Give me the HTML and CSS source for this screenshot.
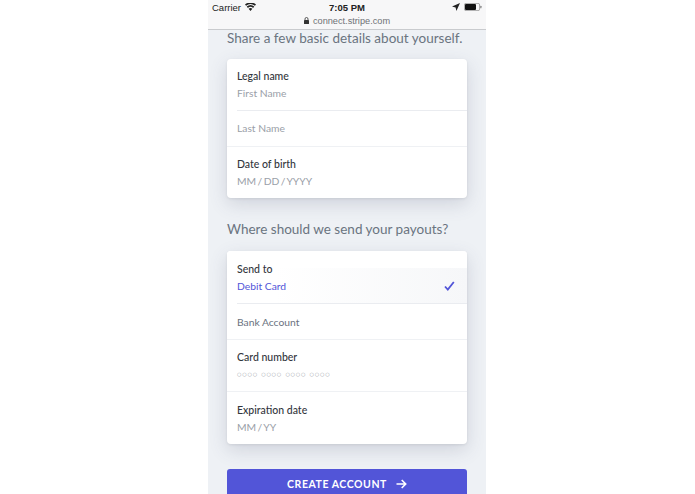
FILE: index.html
```html
<!DOCTYPE html>
<html lang="en">
<head>
<meta charset="utf-8">
<title>Stripe Connect</title>
<link rel="stylesheet" href="styles.css">
</head>
<body>
<div class="phone">
  <header class="chrome">
    <div class="status">
      <div class="status-left">
        <span>Carrier</span>
        <svg class="wifi" width="11" height="8" viewBox="0 0 11 8"><path d="M5.5 8 3.6 5.700a3 3 0 0 1 3.800 0zM2.900 4.900 1.700 3.500a6 6 0 0 1 7.600 0L8.100 4.900a4 4 0 0 0-5.200 0zM1.100 2.800 0 1.500a8.600 8.600 0 0 1 11 0L9.900 2.800a7 7 0 0 0-8.800 0z" fill="#222"/></svg>
      </div>
      <span class="time">7:05 PM</span>
      <div class="status-right">
        <svg width="8" height="8" viewBox="0 0 8 8"><path d="M8 0 0 3.600l3.600.8.800 3.600z" fill="#222"/></svg>
        <svg width="18" height="8" viewBox="0 0 18 8"><rect x=".4" y=".4" width="15.200" height="7.200" rx="1.500" fill="none" stroke="#888" stroke-width=".7"/><rect x="1" y="1" width="11" height="6" rx="1" fill="#111"/><rect x="16.200" y="2.700" width="1.300" height="2.600" rx=".6" fill="#888"/></svg>
      </div>
    </div>
    <div class="url">
      <svg width="5" height="7" viewBox="0 0 5 7"><path d="M1 3V2a1.500 1.500 0 0 1 3 0v1" fill="none" stroke="#333" stroke-width=".8"/><rect y="3" width="5" height="4" rx=".6" fill="#333"/></svg>
      <span>connect.stripe.com</span>
    </div>
  </header>
  <main class="content">
    <h2 class="heading first">Share a few basic details about yourself.</h2>
    <section class="card details">
      <div class="row tall inset">
        <div class="label">Legal name</div>
        <div class="value">First Name</div>
      </div>
      <div class="row short">
        <div class="value">Last Name</div>
      </div>
      <div class="row tall last">
        <div class="label">Date of birth</div>
        <div class="value mask">MM / DD / YYYY</div>
      </div>
    </section>
    <h2 class="heading second">Where should we send your payouts?</h2>
    <section class="card payout">
      <div class="row tall inset selected">
        <div class="label">Send to</div>
        <div class="value accent">Debit Card</div>
        <svg class="check" width="11" height="10" viewBox="0 0 11 10"><path d="M1 5.500 3.800 8.600 9.800 1" fill="none" stroke="#5255d8" stroke-width="1.800"/></svg>
      </div>
      <div class="row short">
        <div class="value option">Bank Account</div>
      </div>
      <div class="row tall">
        <div class="label">Card number</div>
        <div class="value dots">○○○○ ○○○○ ○○○○ ○○○○</div>
      </div>
      <div class="row tall last">
        <div class="label">Expiration date</div>
        <div class="value mask">MM / YY</div>
      </div>
    </section>
    <button class="submit" type="button">
      <span>CREATE ACCOUNT</span>
      <svg width="11" height="10" viewBox="0 0 11 10"><path d="M.5 5h9M5.700 1l4 4-4 4" fill="none" stroke="#fff" stroke-width="1.600"/></svg>
    </button>
  </main>
</div>
</body>
</html>
```
FILE: styles.css
```css
* { box-sizing: border-box; }
html, body { margin: 0; padding: 0; height: 100%; background: #fff; }
body { font-family: Lato, "Open Sans", sans-serif; overflow: hidden; }
.phone { width: 278px; height: 494px; margin-left: 208px; background: #eef1f5; overflow: hidden; }
.chrome { height: 30px; background: #f7f7f8; border-bottom: 1px solid #c9cbce; }
.status { height: 14px; display: grid; grid-template-columns: 1fr auto 1fr; align-items: center; padding: 0 4px; font-family: "Liberation Sans", sans-serif; font-size: 9.500px; color: #222; }
.status-left { display: flex; align-items: center; gap: 4px; }
.status-right { display: flex; align-items: center; justify-content: flex-end; gap: 4px; }
.time { font-weight: 700; font-size: 9.500px; }
.url { height: 13px; display: flex; align-items: center; justify-content: center; gap: 4px; font-family: "Liberation Sans", sans-serif; font-size: 9.200px; color: #6f7276; }
.content { padding: 0 19px; }
.heading { margin: 0; font-weight: 400; font-size: 13.500px; line-height: 20px; color: #6a7480; white-space: nowrap; }
.heading.first { margin-top: -2px; margin-bottom: 11px; }
.heading.second { margin-top: 21px; margin-bottom: 12px; }
.card { background: #fff; border-radius: 4px; box-shadow: 0 6px 18px rgba(70, 80, 110, .18), 0 1px 3px rgba(0, 0, 0, .08); overflow: hidden; }
.row { padding: 0 10px; border-bottom: 1px solid #eff1f4; position: relative; display: flex; flex-direction: column; }
.row.tall { height: 52px; padding-top: 9px; }
.row.short { height: 36px; justify-content: center; }
.details .row.short { padding-bottom: 2px; }
.row.last { border-bottom: 0; }
.details .row.last { height: 51px; }
.row.inset { border-bottom: 0; }
.payout .row.inset { height: 53px; padding-top: 10px; }
.payout .row.last { padding-top: 10px; }
.row.inset::after { content: ""; position: absolute; left: 10px; right: 0; bottom: 0; height: 1px; background: #eaecf0; }
.row.selected { background: linear-gradient(to bottom, #fff 0, #fff 17px, transparent 17px), linear-gradient(to right, #fff 20%, #f6f7f9 100%); }
.label { font-size: 10.500px; font-weight: 500; line-height: 17px; color: #32363c; }
.value { font-size: 10.300px; line-height: 17px; color: #9aa0a8; }
.mask { word-spacing: -1.200px; }
.short .value { line-height: 16px; }
.accent { color: #5255d8; }
.option { color: #6b7280; }
.dots { font-family: "DejaVu Sans", sans-serif; font-size: 5px; letter-spacing: .85px; word-spacing: .9px; }
.check { position: absolute; right: 12px; top: 30px; }
.submit { display: flex; align-items: center; justify-content: center; gap: 9px; width: 240px; height: 34px; margin-top: 25px; padding: 0 0 4px; border: 0; border-radius: 3px; background: #5255d8; color: #fff; font-family: Lato, sans-serif; font-size: 10.500px; font-weight: 700; letter-spacing: .55px; }
```
